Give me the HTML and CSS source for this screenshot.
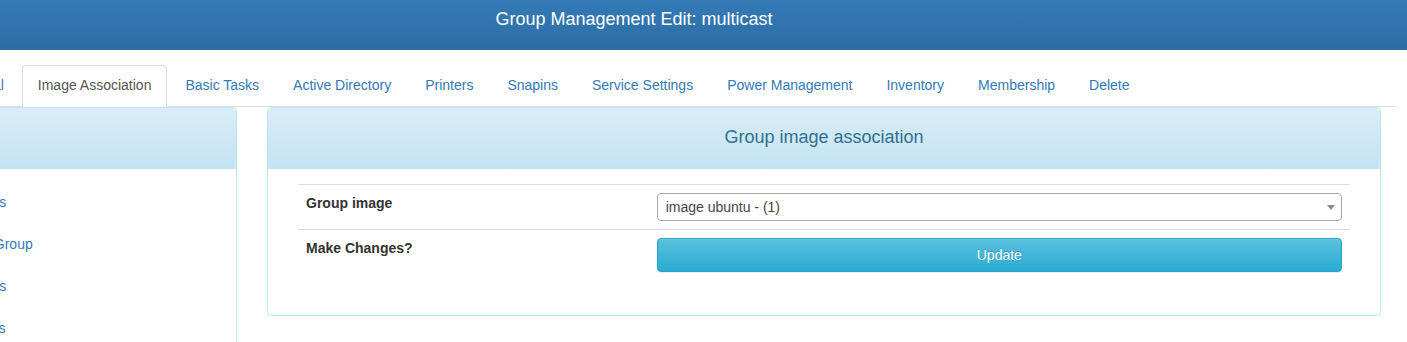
FILE: index.html
```html
<!DOCTYPE html>
<html lang="en">
<head>
  <meta charset="UTF-8">
  <meta name="viewport" content="width=device-width, initial-scale=1.0">
  <title>Group Management Edit: multicast</title>
  <link rel="stylesheet" href="styles.css">
</head>
<body>

  <div class="topbar">
    <div class="brand">Group Management Edit: multicast</div>
  </div>

  <div id="main">
    <ul class="tabs">
      <li><a href="#">General</a></li>
      <li class="active"><a href="#">Image Association</a></li>
      <li><a href="#">Basic Tasks</a></li>
      <li><a href="#">Active Directory</a></li>
      <li><a href="#">Printers</a></li>
      <li><a href="#">Snapins</a></li>
      <li><a href="#">Service Settings</a></li>
      <li><a href="#">Power Management</a></li>
      <li><a href="#">Inventory</a></li>
      <li><a href="#">Membership</a></li>
      <li><a href="#">Delete</a></li>
    </ul>

    <div class="row">
      <div class="sidebar panel">
        <div class="panel-heading"><h3 class="panel-title">&nbsp;</h3></div>
        <ul class="side-menu">
          <li><a href="#">List All Groups</a></li>
          <li><a href="#">Create New Group</a></li>
          <li><a href="#">Export Groups</a></li>
          <li><a href="#">Import Groups</a></li>
        </ul>
      </div>

      <div class="content panel">
        <div class="panel-heading"><h3 class="panel-title">Group image association</h3></div>
        <div class="panel-body">
          <table class="form-table">
            <tr>
              <td class="label-cell">Group image</td>
              <td>
                <div class="select-box">
                  <span class="select-text">image ubuntu - (1)</span>
                  <span class="select-arrow"></span>
                </div>
              </td>
            </tr>
            <tr>
              <td class="label-cell">Make Changes?</td>
              <td><button class="btn-info">Update</button></td>
            </tr>
          </table>
        </div>
      </div>
    </div>
  </div>

</body>
</html>
```

FILE: styles.css
```css
body {
  margin: 0;
  overflow: hidden;
  font-family: 'Liberation Sans', Arial, sans-serif;
  font-size: 14px;
  line-height: 20px;
  color: #333;
  background-color: #fff;
}

a {
  color: #337ab7;
  text-decoration: none;
}

/* top bar */
.topbar {
  height: 50px;
  box-sizing: border-box;
  padding-top: 9px;
  background-image: linear-gradient(to bottom, #337ab7 0, #2e6da4 100%);
}

.brand {
  font-size: 18px;
  line-height: 20px;
  color: #fff;
  text-align: center;
  padding-right: 139px;
}

/* page wrapper, starts left of the window */
#main {
  margin: 15px 11px 0 -129px;
}

/* tabs */
.tabs {
  display: flex;
  list-style: none;
  margin: 0;
  padding: 0 0 0 67px;
  border-bottom: 1px solid #ddd;
}

.tabs li {
  margin-bottom: -1px;
}

.tabs a {
  display: block;
  margin-right: 2px;
  padding: 9px 15px 11px;
  border: 1px solid transparent;
  border-radius: 4px 4px 0 0;
  white-space: nowrap;
}

.tabs .active a {
  color: #555;
  background-color: #fff;
  border-color: #ddd #ddd transparent;
}

/* columns */
.row {
  display: flex;
  gap: 30px;
  padding: 0 15px;
  align-items: flex-start;
}

.panel {
  border: 1px solid #bce8f1;
  border-radius: 4px;
  background-color: #fff;
}

.panel-heading {
  padding: 19px 15px 22px;
  border-radius: 3px 3px 0 0;
  background-image: linear-gradient(to bottom, #d9edf7 0, #c4e3f3 100%);
  color: #31708f;
  text-align: center;
}

.panel-title {
  margin: 0;
  font-size: 18px;
  font-weight: normal;
  line-height: 20px;
}

.sidebar {
  width: 349px;
  flex: none;
  height: 400px;
  border-radius: 4px 4px 0 0;
}

.side-menu {
  list-style: none;
  margin: 0;
  padding: 12px 0 0;
}

.side-menu li a {
  display: block;
  padding: 11px 29px 11px;
  line-height: 20px;
}

.content {
  flex: 1;
}

.panel-body {
  padding: 15px 30px;
}

/* form table */
.form-table {
  width: 100%;
  border-collapse: collapse;
  margin-bottom: 20px;
}

.form-table td {
  padding: 8px;
  border-top: 1px solid #ddd;
  vertical-align: top;
}

.form-table .label-cell {
  width: 33.33%;
  font-weight: bold;
  color: #333;
}

.select-box {
  position: relative;
  height: 28px;
  box-sizing: border-box;
  border: 1px solid #aaa;
  border-radius: 4px;
  background-color: #fff;
}

.select-text {
  display: block;
  padding-left: 8px;
  line-height: 26px;
  color: #444;
}

.select-arrow {
  position: absolute;
  top: 11px;
  right: 6px;
  border-style: solid;
  border-width: 5px 4px 0 4px;
  border-color: #888 transparent transparent transparent;
}

.btn-info {
  display: block;
  width: 100%;
  height: 34px;
  padding: 6px 12px;
  font-family: inherit;
  font-size: 14px;
  line-height: 20px;
  color: #fff;
  text-shadow: 0 -1px 0 rgba(0, 0, 0, 0.2);
  background-image: linear-gradient(to bottom, #5bc0de 0, #2aabd2 100%);
  border: 1px solid #28a4c9;
  border-radius: 4px;
  box-shadow: inset 0 1px 0 rgba(255, 255, 255, 0.15), 0 1px 1px rgba(0, 0, 0, 0.075);
  cursor: pointer;
}
```
